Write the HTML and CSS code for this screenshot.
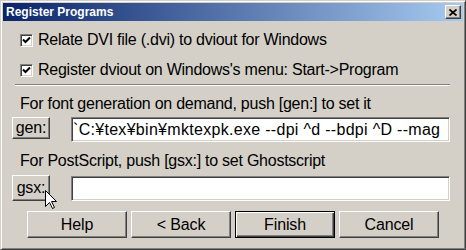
FILE: index.html
```html
<!DOCTYPE html>
<html lang="en">
<head>
    <meta charset="UTF-8">
    <title>Register Programs</title>
    <link rel="stylesheet" href="styles.css">
</head>
<body>
    <div class="window">
        <div class="titlebar">
            <span class="title">Register Programs</span>
            <span class="close">
                <svg width="8" height="7" viewBox="0 0 8 7"><path d="M0.5 0.5 L7.5 6.5 M7.5 0.5 L0.5 6.5" stroke="#000" stroke-width="1.7"/></svg>
            </span>
        </div>

        <div class="content">
            <label class="check">
                <span class="box"><svg width="9" height="9" viewBox="0 0 9 9"><path d="M1 3.5 L3.5 6 L8 1.5" fill="none" stroke="#000" stroke-width="2"/></svg></span>
                Relate DVI file (.dvi) to dviout for Windows
            </label>
            <label class="check second">
                <span class="box"><svg width="9" height="9" viewBox="0 0 9 9"><path d="M1 3.5 L3.5 6 L8 1.5" fill="none" stroke="#000" stroke-width="2"/></svg></span>
                Register dviout on Windows's menu: Start-&gt;Program
            </label>

            <div class="sep"></div>

            <p class="hint gen-hint">For font generation on demand, push [gen:] to set it</p>
            <div class="field-row gen-row">
                <button class="btn small">gen:</button>
                <input class="field" type="text" value="`C:¥tex¥bin¥mktexpk.exe --dpi ^d --bdpi ^D --mag">
            </div>

            <p class="hint ps-hint">For PostScript, push [gsx:] to set Ghostscript</p>
            <div class="field-row gsx-row">
                <button class="btn small tall">gsx:</button>
                <input class="field" type="text" value="">
            </div>

            <div class="actions">
                <button class="btn">Help</button>
                <button class="btn">&lt; Back</button>
                <button class="btn default">Finish</button>
                <button class="btn">Cancel</button>
            </div>
        </div>

        <!-- mouse pointer over gsx: -->
        <svg class="cursor" width="12" height="19" viewBox="0 0 12 19">
            <path d="M0.5 0.5 L0.5 16.5 L4.5 12.5 L7.5 18.5 L9.5 17.5 L6.5 11.5 L11.5 11.5 Z" fill="#fff" stroke="#000" stroke-width="1"/>
        </svg>
    </div>
</body>
</html>
```

FILE: styles.css
```css
body {
    margin: 0;
    background: #d4d0c8;
    font-family: "Liberation Sans", Arial, sans-serif;
}

/* Window frame */
.window {
    position: relative;
    width: 466px;
    height: 250px;
    box-sizing: border-box;
    border: 1px solid;
    border-color: #d4d0c8 #404040 #404040 #d4d0c8;
    box-shadow: inset 1px 1px #fff, inset -1px -1px #808080;
    padding: 2px;
    background: #d4d0c8;
}

.titlebar {
    height: 18px;
    display: flex;
    align-items: center;
    justify-content: space-between;
    padding: 0 2px 0 3px;
    background: linear-gradient(to right, #0a246a, #a6caf0);
}

.title {
    color: #fff;
    font-weight: bold;
    font-size: 12px;
}

.close {
    width: 16px;
    height: 14px;
    box-sizing: border-box;
    display: flex;
    align-items: center;
    justify-content: center;
    background: #d4d0c8;
    border: 1px solid;
    border-color: #fff #404040 #404040 #fff;
    box-shadow: inset -1px -1px #808080;
}

/* Dialog body */
.content {
    padding: 9px 0 0 9px;
    font-size: 16px;
    letter-spacing: -0.25px;
    color: #000;
}

.check {
    display: flex;
    align-items: center;
    height: 20px;
    padding-left: 8px;
    gap: 5px;
}

.check.second {
    margin-top: 10px;
}

.box {
    width: 13px;
    height: 13px;
    box-sizing: border-box;
    display: flex;
    align-items: center;
    justify-content: center;
    background: #fff;
    border: 1px solid;
    border-color: #808080 #fff #fff #808080;
    box-shadow: inset 1px 1px #404040, inset -1px -1px #d4d0c8;
}

.sep {
    margin: 4px 0 0 3px;
    width: 435px;
    height: 1px;
    background: #808080;
    border-bottom: 1px solid #fff;
}

.hint {
    margin: 0;
    height: 20px;
    line-height: 20px;
    padding-left: 8px;
}

.gen-hint { margin-top: 8px; }
.ps-hint { margin-top: 9px; }

.field-row {
    display: flex;
    align-items: flex-start;
    gap: 21px;
}

.gen-row { margin-top: 3px; height: 25px; }
.gsx-row { margin-top: 4px; height: 26px; }

.field {
    width: 379px;
    height: 25px;
    box-sizing: border-box;
    margin: 0;
    padding: 0 1px;
    border: 1px solid;
    border-color: #808080 #fff #fff #808080;
    box-shadow: inset 1px 1px #404040, inset -1px -1px #d4d0c8;
    background: #fff;
    font-family: inherit;
    font-size: 16px;
    letter-spacing: 0.3px;
    color: #000;
    outline: none;
}

.gsx-row .field { margin-top: 1px; }

/* Classic buttons */
.btn {
    width: 100px;
    height: 27px;
    margin: 0;
    padding: 0;
    box-sizing: border-box;
    background: #d4d0c8;
    border: 1px solid;
    border-color: #fff #404040 #404040 #fff;
    box-shadow: inset -1px -1px #808080;
    font-family: inherit;
    font-size: 16px;
    letter-spacing: -0.15px;
    color: #000;
}

.btn.small {
    width: 38px;
    height: 22px;
}

.btn.small.tall {
    height: 26px;
}

.btn.default {
    border-color: #000;
    box-shadow: inset 1px 1px #fff, inset -1px -1px #404040, inset -2px -2px #808080;
}

.actions {
    display: flex;
    gap: 4px;
    margin: 10px 0 0 15px;
}

.cursor {
    position: absolute;
    left: 44px;
    top: 189px;
}
```
